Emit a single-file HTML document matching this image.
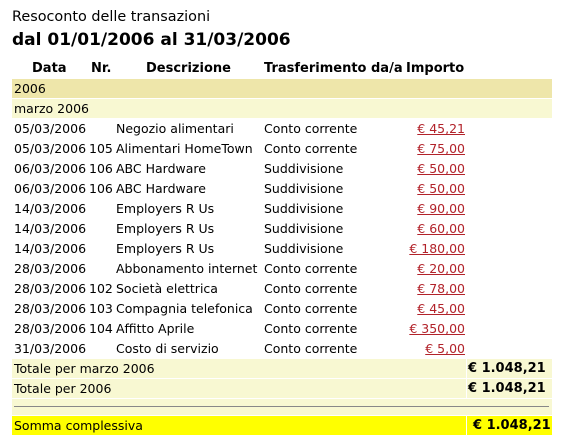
<!DOCTYPE html>
<html><head><meta charset="utf-8"><style>
body{margin:0;background:#fff;font-family:"DejaVu Sans","Liberation Sans",sans-serif;font-size:12.5px;color:#000;width:570px;height:448px;position:relative;overflow:hidden}
.a{position:absolute;white-space:nowrap;line-height:21px}
.b{font-weight:bold;font-size:13px}
.r{position:absolute;left:12px;height:19px}
.amt{position:absolute;right:105px;color:#b2222a;text-decoration:underline;white-space:nowrap;line-height:21px}
</style></head><body>
<div class="a" style="left:12px;top:7px;font-size:14.4px">Resoconto delle transazioni</div>
<div class="a" style="left:12px;top:29px;font-size:17px;font-weight:bold;line-height:22px">dal 01/01/2006 al 31/03/2006</div>
<div class="a b" style="top:58px;left:32px">Data</div>
<div class="a b" style="top:58px;left:91px">Nr.</div>
<div class="a b" style="top:58px;left:146px">Descrizione</div>
<div class="a b" style="top:58px;left:264px">Trasferimento da/a</div>
<div class="a b" style="top:58px;left:406px">Importo</div>
<div class="r" style="top:79px;width:540px;background:#eee6aa"></div>
<div class="a" style="top:78px;left:14px">2006</div>
<div class="r" style="top:99px;width:540px;background:#f8f8d2"></div>
<div class="a" style="top:98px;left:14px">marzo 2006</div>
<div id="rows"></div>
<script>
var d=[["05/03/2006","","Negozio alimentari","Conto corrente","€ 45,21"],
["05/03/2006","105","Alimentari HomeTown","Conto corrente","€ 75,00"],
["06/03/2006","106","ABC Hardware","Suddivisione","€ 50,00"],
["06/03/2006","106","ABC Hardware","Suddivisione","€ 50,00"],
["14/03/2006","","Employers R Us","Suddivisione","€ 90,00"],
["14/03/2006","","Employers R Us","Suddivisione","€ 60,00"],
["14/03/2006","","Employers R Us","Suddivisione","€ 180,00"],
["28/03/2006","","Abbonamento internet","Conto corrente","€ 20,00"],
["28/03/2006","102","Società elettrica","Conto corrente","€ 78,00"],
["28/03/2006","103","Compagnia telefonica","Conto corrente","€ 45,00"],
["28/03/2006","104","Affitto Aprile","Conto corrente","€ 350,00"],
["31/03/2006","","Costo di servizio","Conto corrente","€ 5,00"]];
var h="";d.forEach(function(r,i){var t=118+i*20;
h+='<div class="a" style="top:'+t+'px;left:14px">'+r[0]+'</div><div class="a" style="top:'+t+'px;left:89px">'+r[1]+'</div><div class="a" style="top:'+t+'px;left:116px">'+r[2]+'</div><div class="a" style="top:'+t+'px;left:264px">'+r[3]+'</div><div class="amt" style="top:'+t+'px">'+r[4]+'</div>';});
document.getElementById('rows').outerHTML=h;
</script>
<div class="r" style="top:359px;width:454px;background:#f8f8d2"></div>
<div class="r" style="top:359px;left:467px;width:85px;background:#f8f8d2"></div>
<div class="a" style="top:358px;left:14px">Totale per marzo 2006</div>
<div class="a b" style="top:358px;left:468px">€ 1.048,21</div>
<div class="r" style="top:379px;width:454px;background:#f8f8d2"></div>
<div class="r" style="top:379px;left:467px;width:85px;background:#f8f8d2"></div>
<div class="a" style="top:378px;left:14px">Totale per 2006</div>
<div class="a b" style="top:378px;left:468px">€ 1.048,21</div>
<div class="r" style="top:399px;width:540px;height:16px;background:#f8f8d2"></div>
<div class="r" style="top:406px;left:14px;width:535px;height:1px;background:#888"></div>
<div class="r" style="top:416px;width:454px;background:#ffff00"></div>
<div class="r" style="top:416px;left:467px;width:85px;background:#ffff00"></div>
<div class="a" style="top:415px;left:14px">Somma complessiva</div>
<div class="a b" style="top:415px;left:473px">€ 1.048,21</div>
</body></html>
